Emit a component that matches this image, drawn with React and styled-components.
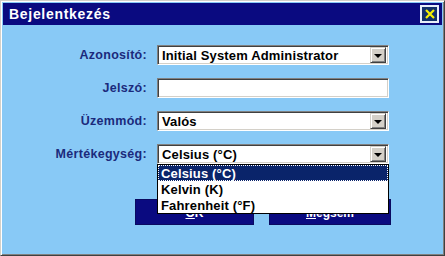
import React from 'react'
import styled, { createGlobalStyle } from 'styled-components'

const Global = createGlobalStyle`
html, body { margin: 0; padding: 0; }
body { width: 445px; height: 256px; overflow: hidden; font-family: "Liberation Sans", Arial, sans-serif; }
`

const Window = styled.div`
width: 445px;
height: 256px;
box-sizing: border-box;
background: #88c9f6;
border-top: 1px solid #d4d0c8;
border-left: 1px solid #d4d0c8;
border-right: 1px solid #404040;
border-bottom: 1px solid #404040;
box-shadow: inset 1px 1px 0 #ffffff, inset -1px -1px 0 #808080;
padding: 2px;
display: flex;
flex-direction: column;
`

const TitleBar = styled.div`
height: 22px;
background: #0a0a80;
display: flex;
align-items: center;
justify-content: space-between;
padding: 0 3px 0 6px;
`

const Title = styled.span`
color: #fff;
font-weight: bold;
font-size: 14px;
letter-spacing: 0.7px;
`

const CloseBtn = styled.div`
width: 15px;
height: 14px;
border: 2px solid #e8eef8;
background: #12306a;
display: flex;
align-items: center;
justify-content: center;
`

const Body = styled.div`
flex: 1;
padding-top: 20px;
display: flex;
flex-direction: column;
`

const Form = styled.div`
display: grid;
grid-template-columns: 144px 232px;
column-gap: 10px;
row-gap: 13px;
`

const Label = styled.div`
height: 20px;
display: flex;
align-items: center;
justify-content: flex-end;
color: #1b2a7c;
font-weight: bold;
font-size: 12.5px;
letter-spacing: 0.3px;
`

const Field = styled.div`
position: relative;
height: 20px;
box-sizing: border-box;
background: #fff;
border-top: 1px solid #808080;
border-left: 1px solid #808080;
border-right: 1px solid #ffffff;
border-bottom: 1px solid #ffffff;
box-shadow: inset 1px 1px 0 #404040, inset -1px -1px 0 #d4d0c8;
display: flex;
align-items: center;
padding: 0 2px 0 4px;
font-weight: bold;
font-size: 13px;
letter-spacing: 0.15px;
color: #000;
`

const Value = styled.span`
flex: 1;
white-space: nowrap;
`

const Arrow = styled.div`
width: 16px;
height: 16px;
box-sizing: border-box;
background: #d4d0c8;
border-top: 1px solid #d4d0c8;
border-left: 1px solid #d4d0c8;
border-right: 1px solid #404040;
border-bottom: 1px solid #404040;
box-shadow: inset 1px 1px 0 #fff, inset -1px -1px 0 #808080;
display: flex;
align-items: center;
justify-content: center;
`

const Tri = styled.div`
width: 0;
height: 0;
border-left: 4px solid transparent;
border-right: 4px solid transparent;
border-top: 4px solid #000;
margin-top: 1px;
`

const List = styled.div`
position: absolute;
top: 19px;
left: -1px;
right: -1px;
z-index: 5;
background: #fff;
border: 1px solid #000;
`

const Option = styled.div`
height: 16px;
box-sizing: border-box;
display: flex;
align-items: center;
padding-left: 2px;
font-weight: bold;
font-size: 13px;
letter-spacing: 0.15px;
color: ${p => (p.$active ? '#fff' : '#000')};
background: ${p => (p.$active ? '#0a246a' : '#fff')};
border: 1px dotted ${p => (p.$active ? '#fff' : 'transparent')};
`

const Buttons = styled.div`
display: flex;
gap: 15px;
margin-top: 35px;
padding-left: 132px;
`

const Button = styled.div`
width: ${p => p.$w}px;
height: 26px;
box-sizing: border-box;
background: #0a0a80;
border: 1px solid #0a0a60;
color: #fff;
font-weight: bold;
font-size: 12px;
display: flex;
align-items: center;
justify-content: center;
padding-top: 2px;
u { text-decoration: underline; }
`

const Select = ({ value, children }) => (
  <Field>
    <Value>{value}</Value>
    <Arrow><Tri /></Arrow>
    {children}
  </Field>
)

export default function App() {
  return (
    <>
      <Global />
      <Window>
        <TitleBar>
          <Title>Bejelentkezés</Title>
          <CloseBtn>
            <svg width="10" height="10" viewBox="0 0 10 10">
              <path d="M1 1 L9 9 M9 1 L1 9" stroke="#f4f000" strokeWidth="2.2" />
            </svg>
          </CloseBtn>
        </TitleBar>
        <Body>
          <Form>
            <Label>Azonosító:</Label>
            <Select value="Initial System Administrator" />
            <Label>Jelszó:</Label>
            <Field />
            <Label>Üzemmód:</Label>
            <Select value="Valós" />
            <Label>Mértékegység:</Label>
            <Select value="Celsius (°C)">
              <List>
                <Option $active>Celsius (°C)</Option>
                <Option>Kelvin (K)</Option>
                <Option>Fahrenheit (°F)</Option>
              </List>
            </Select>
          </Form>
          <Buttons>
            <Button $w={119}><u>O</u>K</Button>
            <Button $w={122}><u>M</u>égsem</Button>
          </Buttons>
        </Body>
      </Window>
    </>
  )
}
